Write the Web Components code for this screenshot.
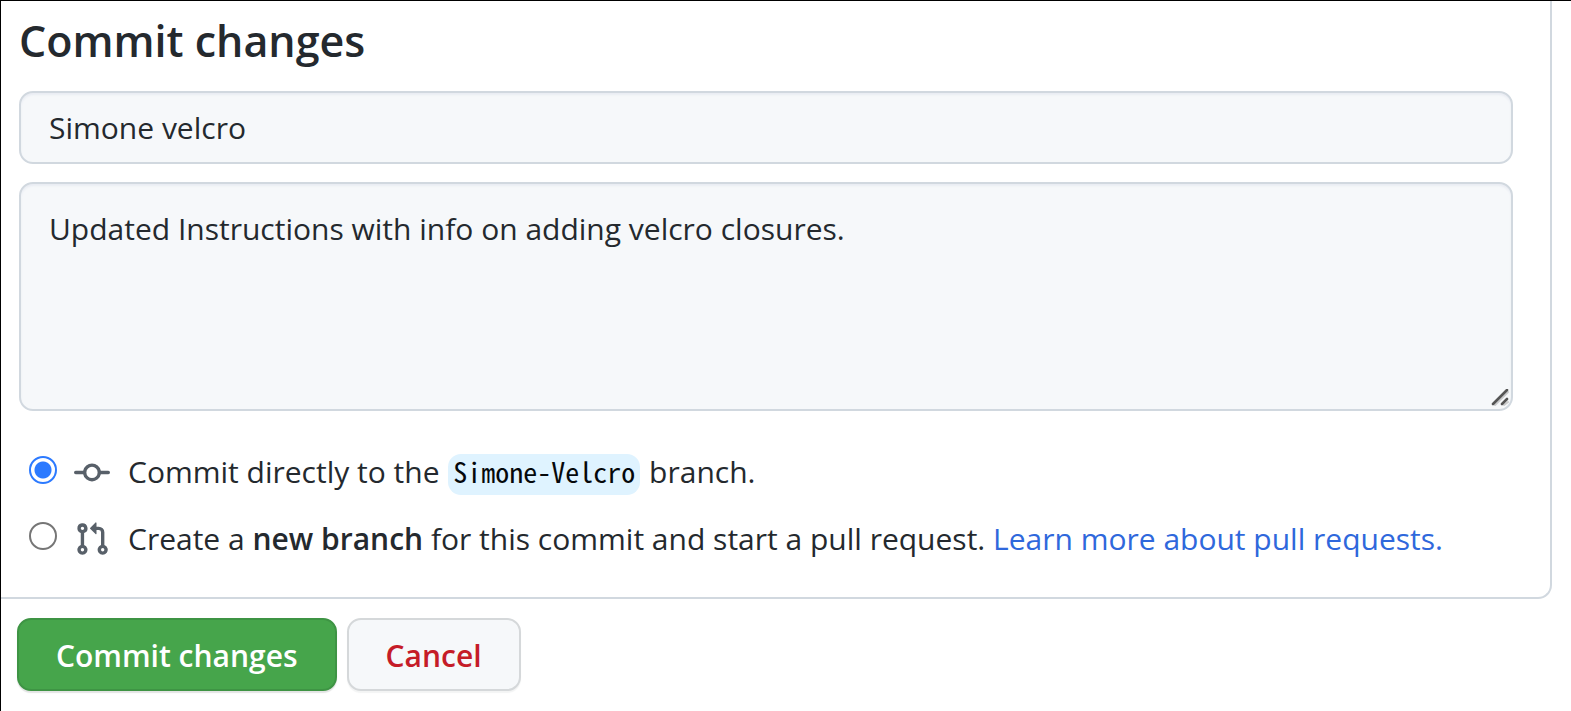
<!DOCTYPE html>
<html lang="en">
<head>
<meta charset="utf-8">
<title>Commit changes</title>
<style>
  html { height: 100%; }
  body {
    margin: 0;
    min-height: 100%;
    box-sizing: border-box;
    border-top: 1px solid #000;
    border-left: 1px solid #000;
    background: #fff;
    color: #24292e;
    font: 30px/44px "Open Sans", "Noto Sans", sans-serif;
    --line: #d1d8df;
    --field: #f6f8fa;
    --accent: #2c7aff;
    --radius: 14px;
  }
</style>
</head>
<body>
<commit-form></commit-form>

<script>
const define = (name, html) => {
  const template = document.createElement('template');
  template.innerHTML = html;
  customElements.define(name, class extends HTMLElement {
    constructor() {
      super();
      this.attachShadow({ mode: 'open' }).append(template.content.cloneNode(true));
    }
  });
};

define('commit-panel', `
  <style>
    :host {
      display: flex; flex-direction: column;
      margin-right: 19px; padding: 12px 37px 36px 18px;
      border: solid var(--line); border-width: 0 2px 2px 0;
      border-bottom-right-radius: var(--radius);
    }
    h1 { margin: 0 0 22px; font-size: 43px; line-height: 56px; font-weight: 600; }
  </style>
  <h1><slot name="heading"></slot></h1>
  <slot></slot>`);

define('commit-summary', `
  <style>
    :host { display: block; margin-bottom: 18px; }
    input {
      display: block; width: 100%; height: 73px; box-sizing: border-box; margin: 0;
      padding: 0 28px; border: 2px solid var(--line); border-radius: var(--radius);
      background: var(--field); color: inherit; font: inherit; outline: 0;
      box-shadow: inset 0 2px 2px rgba(225,228,238,.6);
    }
  </style>
  <input type="text" aria-label="Commit summary" value="Simone velcro">`);

define('commit-description', `
  <style>
    :host { display: block; position: relative; margin-bottom: 39px; }
    textarea {
      display: block; width: 100%; height: 229px; box-sizing: border-box; margin: 0;
      padding: 23px 28px; border: 2px solid var(--line); border-radius: var(--radius);
      background: var(--field); color: inherit; font: inherit; outline: 0; resize: none;
      box-shadow: inset 0 2px 2px rgba(225,228,238,.6);
    }
    svg { position: absolute; right: 4px; bottom: 4px; pointer-events: none; }
  </style>
  <textarea aria-label="Extended description">Updated Instructions with info on adding velcro closures.</textarea>
  <svg width="18" height="18" viewBox="0 0 18 18" fill="none" stroke-linecap="round" aria-hidden="true">
    <path d="M4 16 17 3M13 16l4-3" stroke="#c9cacb" stroke-width="2"/>
    <path d="M2 15 16 1M11 15l5-5" stroke="#555" stroke-width="2.6"/>
  </svg>`);

define('git-icon', `
  <style>
    :host { display: flex; justify-content: center; width: 36px; color: #586069; }
    svg { display: block; fill: currentColor; }
    :host([name="commit"]) .pull, :host([name="pull"]) .commit { display: none; }
  </style>
  <svg class="commit" width="36" height="36" viewBox="0 0 16 16" aria-hidden="true">
    <path fill-rule="evenodd" d="M10.5 7.75a2.5 2.5 0 11-5 0 2.5 2.5 0 015 0zm1.43.75a4.002 4.002 0 01-7.86 0H.75a.75.75 0 110-1.5h3.32a4.001 4.001 0 017.86 0h3.32a.75.75 0 110 1.5h-3.32z"/>
  </svg>
  <svg class="pull" width="36" height="36" viewBox="0 0 16 16" aria-hidden="true">
    <path fill-rule="evenodd" d="M7.177 3.073L9.573.677A.25.25 0 0110 .854v4.792a.25.25 0 01-.427.177L7.177 3.427a.25.25 0 010-.354zM3.75 2.5a.75.75 0 100 1.5.75.75 0 000-1.5zm-2.25.75a2.25 2.25 0 113 2.122v5.256a2.251 2.251 0 11-1.5 0V5.372A2.25 2.25 0 011.5 3.25zM11 2.5h-1V4h1a1 1 0 011 1v5.628a2.251 2.251 0 101.5 0V5A2.5 2.5 0 0011 2.5zm1 10.25a.75.75 0 111.5 0 .75.75 0 01-1.5 0zM3.75 12a.75.75 0 100 1.5.75.75 0 000-1.5z"/>
  </svg>`);

define('branch-name', `
  <style>
    :host {
      display: inline-block; padding: 0 5px 6px; margin: 0 1px; border-radius: 13px;
      background: #dff3ff; color: #05080b;
      font: 28px/35px "Noto Sans Mono CJK SC", "Liberation Mono", monospace;
    }
  </style>
  <slot></slot>`);

define('commit-target', `
  <style>
    :host { display: flex; flex-direction: column; gap: 22px; padding-left: 10px; }
    .row { display: flex; align-items: center; min-height: 44px; }
    input {
      appearance: none; box-sizing: border-box; flex: none;
      width: 28px; height: 28px; margin: 0 17px 6px 0;
      border: 2px solid #767676; border-radius: 50%; background: #fff;
    }
    input:checked {
      border-color: var(--accent);
      background: radial-gradient(circle, var(--accent) 8px, #fff 9px);
    }
    git-icon { flex: none; margin-right: 18px; }
    b { font-weight: 600; }
    a { color: #2f68dc; text-decoration: none; }
  </style>
  <div class="row">
    <input type="radio" name="target" id="direct" checked>
    <git-icon name="commit"></git-icon>
    <label for="direct">Commit directly to the <branch-name>Simone-Velcro</branch-name> branch.</label>
  </div>
  <div class="row">
    <input type="radio" name="target" id="pull">
    <git-icon name="pull"></git-icon>
    <label for="pull">Create a <b>new branch</b> for this commit and start a pull request. <a href="#pull-requests">Learn more about pull requests.</a></label>
  </div>`);

define('action-button', `
  <style>
    :host { display: block; }
    button {
      display: block; height: 73px; margin: 0; padding: 2px 37px 0;
      border: 2px solid #d5d8da; border-radius: var(--radius);
      background: #f6f8fa; color: #c51c28; font: inherit; font-weight: 600;
      box-shadow: 0 2px 1px rgba(27,31,35,.05);
    }
    :host([kind="primary"]) button {
      border-color: #3e9444; background: #46a54b; color: #fff;
      box-shadow: 0 2px 1px rgba(27,31,35,.12);
    }
  </style>
  <button type="button"><slot></slot></button>`);

define('commit-form', `
  <style>
    :host { display: block; }
    footer { display: flex; gap: 10px; padding: 19px 16px; }
  </style>
  <commit-panel>
    <span slot="heading">Commit changes</span>
    <commit-summary></commit-summary>
    <commit-description></commit-description>
    <commit-target></commit-target>
  </commit-panel>
  <footer>
    <action-button kind="primary">Commit changes</action-button>
    <action-button>Cancel</action-button>
  </footer>`);
</script>
</body>
</html>
